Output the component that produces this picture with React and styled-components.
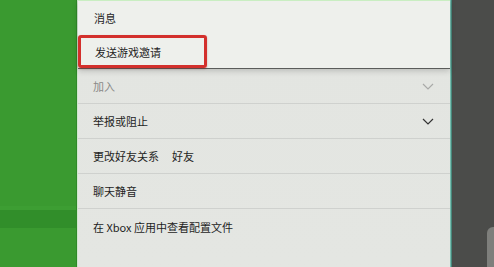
import styled, { createGlobalStyle } from "styled-components";

const GlobalStyle = createGlobalStyle`
  body {
    margin: 0;
    font-family: "Noto Sans CJK SC", "Noto Sans", sans-serif;
    background: #4a4b49;
  }
`;

const Screen = styled.div`
  width: 494px;
  height: 267px;
  display: flex;
  overflow: hidden;
`;

const GreenSide = styled.div`
  width: 76px;
  display: flex;
  flex-direction: column;
  background: #3a9a30;
  border-right: 1px solid #2f8a28;
`;

const GreenBand = styled.div`
  height: ${(props) => props.height};
  background: ${(props) => props.color};
  flex-shrink: 0;
`;

const Panel = styled.div`
  width: 372px;
  display: flex;
  flex-direction: column;
  background: linear-gradient(#dcdedb 0px, #e3e5e1 40px, #e4e6e2 100%);
  border-left: 1px solid #cfe6cc;
`;

const Popup = styled.div`
  height: 69px;
  background: #eef0ec;
  border-top: 1px solid #c9eec2;
  border-bottom: 1px solid #5a5c5a;
  box-shadow: 0 2px 6px rgba(0, 0, 0, 0.18);
  display: flex;
  flex-direction: column;
  position: relative;
  z-index: 2;
  box-sizing: border-box;
`;

const MenuItem = styled.div`
  height: ${(props) => props.height};
  display: flex;
  align-items: center;
  padding-left: ${(props) => props.pad};
  font-size: 11px;
  color: #1e1e1e;
`;

const Highlight = styled.div`
  width: 129px;
  height: 33px;
  box-sizing: border-box;
  border: 3px solid #d3302c;
  border-radius: 3px;
  display: flex;
  align-items: center;
  padding-left: 14px;
  margin-top: 1px;
  box-shadow: 0 1px 2px rgba(120, 0, 0, 0.3);
`;

const Row = styled.div`
  height: 35px;
  box-sizing: border-box;
  display: flex;
  align-items: center;
  justify-content: space-between;
  padding: 0 16px 0 15px;
  border-bottom: ${(props) => (props.last ? "none" : "1px solid #cfd1ce")};
  font-size: 11px;
  color: ${(props) => (props.muted ? "#8a8a88" : "#1e1e1e")};
`;

const Label = styled.div`
  display: flex;
  gap: 13px;
`;

const Edge = styled.div`
  width: 2px;
  background: linear-gradient(90deg, #8fd8c8, #2e6a60);
`;

const DarkSide = styled.div`
  flex: 1;
  background: #4b4c4a;
  display: flex;
  flex-direction: column;
  justify-content: flex-end;
  align-items: flex-end;
`;

const Glimpse = styled.div`
  width: 7px;
  height: 40px;
  background: #7e7f7c;
  border-top-left-radius: 6px;
`;

function Chevron({ color }) {
  return (
    <svg width="12" height="7" viewBox="0 0 12 7">
      <path d="M1 1 L6 6 L11 1" fill="none" stroke={color} strokeWidth="1.2" />
    </svg>
  );
}

export default function App() {
  return (
    <Screen>
      <GlobalStyle />
      <GreenSide>
        <GreenBand height="206px" color="#3a9a30" />
        <GreenBand height="4px" color="#3d9e33" />
        <GreenBand height="18px" color="#318e2a" />
        <GreenBand height="39px" color="#3a9a30" />
      </GreenSide>
      <Panel>
        <Popup>
          <MenuItem height="34px" pad="16px">消息</MenuItem>
          <MenuItem height="34px" pad="0px">
            <Highlight>发送游戏邀请</Highlight>
          </MenuItem>
        </Popup>
        <Row muted>
          加入
          <Chevron color="#a9aaa8" />
        </Row>
        <Row>
          举报或阻止
          <Chevron color="#333" />
        </Row>
        <Row>
          <Label>
            <span>更改好友关系</span>
            <span>好友</span>
          </Label>
        </Row>
        <Row>聊天静音</Row>
        <Row last>在 Xbox 应用中查看配置文件</Row>
      </Panel>
      <Edge />
      <DarkSide>
        <Glimpse />
      </DarkSide>
    </Screen>
  );
}
